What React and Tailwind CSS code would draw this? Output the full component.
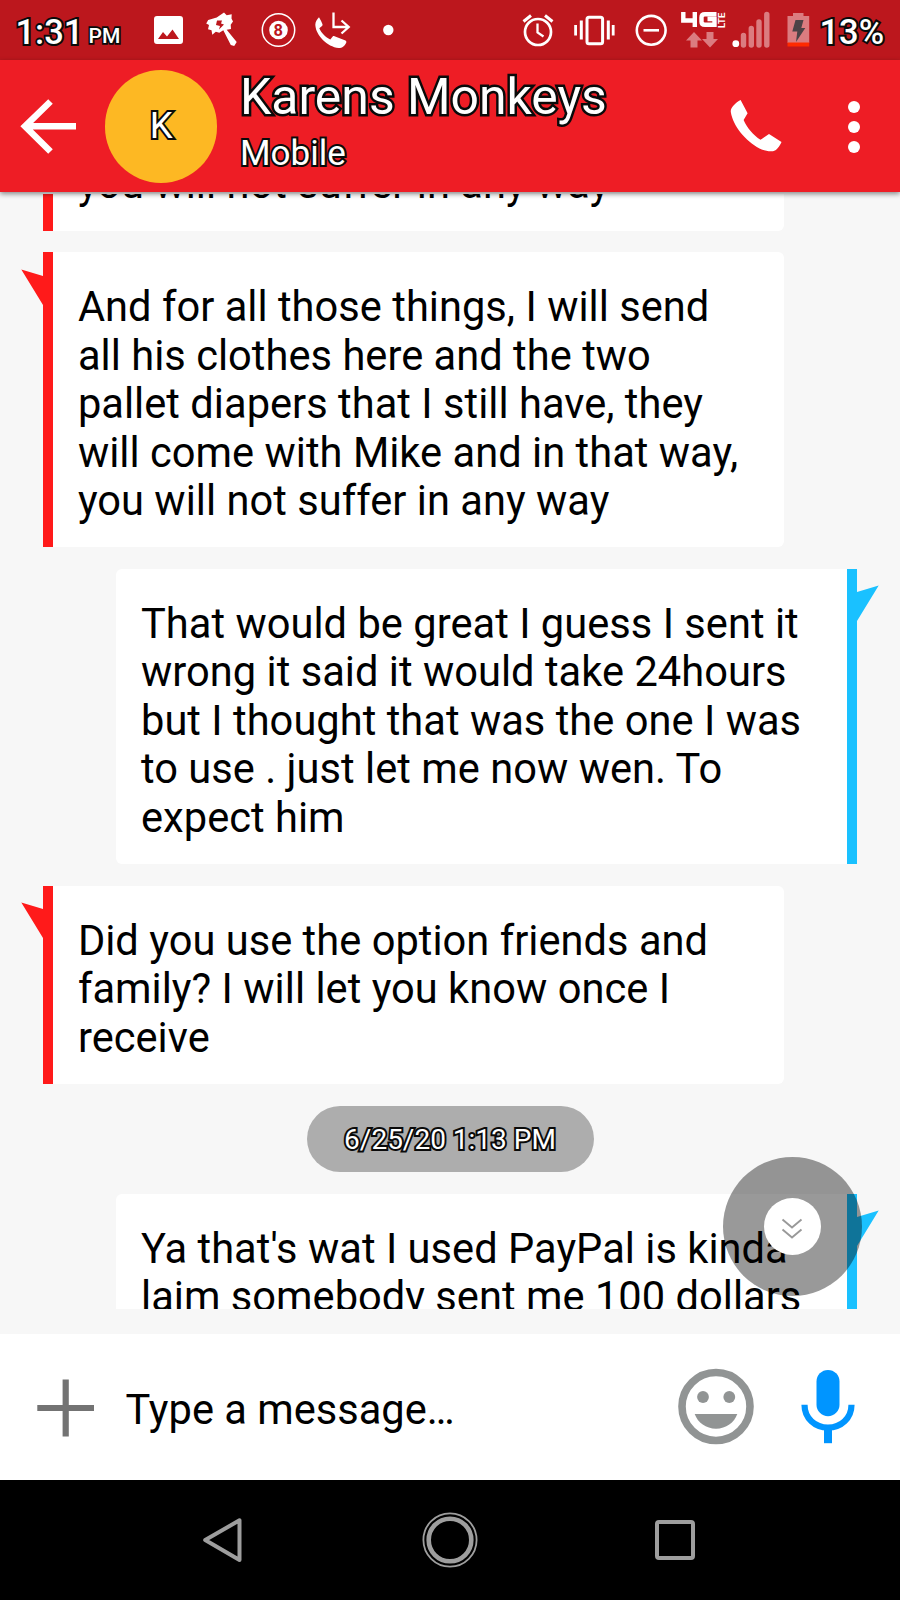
import React from "react";

const outline = "text-white [paint-order:stroke_fill] [-webkit-text-stroke-color:#0a0a0a] whitespace-nowrap";

function StatusBar() {
  return (
    <div className="flex h-[60px] shrink-0 items-start bg-[#bc171d]">
      <div className={`${outline} ml-[15.500px] mt-[12px] w-[61px] text-[34.500px] leading-[40px] font-medium [-webkit-text-stroke-width:4px]`}>1:31</div>
      <div className={`${outline} ml-[12px] mt-[22px] w-[32px] text-[21px] leading-[28px] font-medium [-webkit-text-stroke-width:3.400px]`}>PM</div>
      <svg className="ml-[32.500px] h-[60px] w-[244px]" viewBox="153 0 244 60" fill="#fff">
        <path fillRule="evenodd" d="M157 16h23q3 0 3 3v22q0 3-3 3h-23q-3 0-3-3v-22q0-3 3-3zM158 39h21l-6.5-9.5-5.500 7-4-4.500z" />
        <path fillRule="evenodd" d="M224 12.500l2.700 2.700 5-1-.2 4.300 1.500 3-2.300 3.200.3 4.300-4.300.7 10 12.300-2.500 4-3.400-.9-7.500-14.800-4 2.500-3.500-1-3.500 3-.8-4.500-3.500-1 1-4.300-2.800-1.500 2-3.500 8.500-2.500zM217 20.500l-1 4.500 4 1-1 3.500 5-5-3-1 1-3z" />
        <circle cx="278.500" cy="30" r="16.200" fill="none" stroke="#fff" strokeWidth="1.500" />
        <circle cx="278.500" cy="30" r="9.300" />
        <text x="278.300" y="35.700" textAnchor="middle" fontFamily="Roboto" fontWeight="700" fontSize="16.500" fill="#bc171d">8</text>
        <path d="M319 17.200c1.500 2.500 2.600 4.600 3.500 7 .2.700 0 1.300-.5 1.700l-2.700 2.300c2 4.600 6.300 9 11 11.300l2.400-3c.5-.5 1.200-.6 1.800-.2l11 4.200c.8.500 1.100 1.300.7 2.200-1.200 3-3.800 5.400-7.500 5.400-11.500-1.600-22.800-12.300-23.400-23.400 0-3 2-5.700 3.700-7.500z" />
        <path d="M333.500 12.500v14.500h14M341.500 20.500l7.200 6.500-7.200 6.500" fill="none" stroke="#fff" strokeWidth="2.300" />
        <circle cx="388.300" cy="30" r="5.200" />
      </svg>
      <svg className="ml-[123px] h-[60px] w-[290px]" viewBox="520 0 290 60" fill="none" stroke="#fff">
        <circle cx="538" cy="32" r="13" strokeWidth="2.700" />
        <path d="M537.500 23.500v9l6 4" strokeWidth="2.300" />
        <path d="M523.500 21.500l7.500-6M552.500 21.500l-7.500-6" strokeWidth="3" />
        <rect x="587" y="17.200" width="15.600" height="26.600" rx="2" strokeWidth="3" />
        <path d="M581.300 20.500v19M608.300 20.500v19" strokeWidth="3" />
        <path d="M575.600 25v10.500M613.200 25v10.500" strokeWidth="2.800" />
        <circle cx="651.200" cy="30.300" r="14.400" strokeWidth="2.600" />
        <path d="M643.500 30.300h15.500" strokeWidth="2.600" />
        <path d="M683.300 12v8.500h11M694.800 12v15" strokeWidth="4.400" />
        <path d="M716.500 14.200h-11.500q-3.500 0-3.500 3v4.600q0 3 3.500 3h9.500v-5.800h-7" strokeWidth="4.400" />
        <g transform="translate(725.200 28) rotate(-90)"><text x="0" y="0" fontFamily="Roboto" fontWeight="700" fontSize="9.500" fill="#fff" stroke="none">LTE</text></g>
        <path d="M694 32l8 8.500h-4.500v7h-7v-7h-4.500zM710 47.500l-8-8.500h4.500v-7h7v7h4.500z" fill="#db7c80" stroke="none" />
        <circle cx="735.800" cy="43.700" r="3.400" fill="#fff" stroke="none" />
        <path d="M743.500 35.500v9.500M751.300 28.500v16.500M759 22v23M766.800 14.500v30.500" stroke="#db7c80" strokeWidth="5.400" strokeLinecap="round" />
        <path d="M793 13h10.500v3h5.700v27h-21.700v-27h5.500z" fill="#db7c80" stroke="none" />
        <path d="M787.500 42.500h21.700v4h-21.700z" fill="#ff2a00" stroke="none" />
        <path d="M795.500 20h8l-2.200 8h4l-9.300 14 1.300-10.500h-5z" fill="#4d4246" stroke="none" />
      </svg>
      <div className={`${outline} ml-[9.500px] mt-[12px] text-[34.500px] leading-[40px] font-medium [-webkit-text-stroke-width:4px]`}>13%</div>
    </div>
  );
}

function Header() {
  return (
    <header className="relative z-10 flex h-[132px] shrink-0 items-start bg-[#ee1d25] shadow-[0_2px_5px_rgba(0,0,0,0.45)]">
      <svg className="ml-[19.500px] mt-[36px] h-[60px] w-[57px]" viewBox="20 96 57 60" fill="none" stroke="#fff" strokeWidth="6.500">
        <path d="M50.500 101.500L25 126.300 50.500 151.500M25 126.300h51" />
      </svg>
      <div className="ml-[28.300px] mt-[10px] flex h-[112.600px] w-[112.600px] items-center justify-center rounded-full bg-[#fdb823]">
        <span className={`${outline} text-[36.500px] leading-[40px] [-webkit-text-stroke-width:4px]`}>K</span>
      </div>
      <div className="ml-[22.600px] mt-[8px] w-[480px]">
        <div className={`${outline} text-[49.900px] leading-[58px] [-webkit-text-stroke-width:5px]`}>Karens Monkeys</div>
        <div className={`${outline} mt-[7px] text-[35px] leading-[42px] [-webkit-text-stroke-width:4px]`}>Mobile</div>
      </div>
      <svg className="ml-[9.500px] mt-[36px] h-[60px] w-[54px]" viewBox="729 96 54 60" fill="#fff">
        <path d="M740.600 100l7 13.300-4 6.700c3.500 8 9.500 15 16.900 19.800l8.500-5.800 12.500 8c-2 4.500-5 8.600-8.500 9.200-4 .6-9-.5-13.500-2.800-14-7.500-26.500-22.500-28.700-36.500-.6-4 4.500-9 9.800-11.900z" />
      </svg>
      <div className="ml-[64.500px] mt-[40.500px] flex flex-col gap-[8.200px]">
        <i className="size-[12px] rounded-full bg-white" />
        <i className="size-[12px] rounded-full bg-white" />
        <i className="size-[12px] rounded-full bg-white" />
      </div>
    </header>
  );
}

function Incoming({ lines, tail = true }) {
  return (
    <div className="relative ml-[43.300px] flex w-[741px] shrink-0">
      {tail && (
        <svg className="absolute -left-[22px] top-[16.500px] h-[37px] w-[23px]" viewBox="0 0 23 37" fill="#ff1a1a">
          <path d="M.3.500L22 7h1v30l-1-1z" />
        </svg>
      )}
      <div className="w-[10px] bg-[#ff1a1a]" />
      <Text lines={lines} className="rounded-r-[6px] pl-[24.600px]" />
    </div>
  );
}

function Outgoing({ lines }) {
  return (
    <div className="relative ml-[115.700px] flex w-[741px] shrink-0">
      <Text lines={lines} className="rounded-l-[6px] pl-[25.300px]" />
      <div className="w-[10px] bg-[#1ac1ff]" />
      <svg className="absolute -right-[22px] top-[16px] h-[37px] w-[23px]" viewBox="0 0 23 37" fill="#1ac1ff">
        <path d="M22.700.500L1 7H0v30l1-1z" />
      </svg>
    </div>
  );
}

function Text({ lines, className }) {
  return (
    <div className={`flex-1 bg-white pt-[31px] pb-[22px] text-[41.600px] leading-[48.400px] tracking-[0.035px] whitespace-nowrap text-black ${className}`}>
      {lines.map((line) => (
        <p key={line}>{line}</p>
      ))}
    </div>
  );
}

function Conversation() {
  return (
    <main className="relative h-[1141.500px] shrink-0 bg-[#f7f7f7] pt-[2px]">
      <div className="flex h-[1115px] flex-col gap-[21.700px] overflow-hidden">
        <div className="-mt-[64.800px] shrink-0">
          <Incoming tail={false} lines={["you will not suffer in any way"]} />
        </div>
        <Incoming
          lines={[
            "And for all those things, I will send",
            "all his clothes here and the two",
            "pallet diapers that I still have, they",
            "will come with Mike and in that way,",
            "you will not suffer in any way",
          ]}
        />
        <Outgoing
          lines={[
            "That would be great I guess I sent it",
            "wrong it said it would take 24hours",
            "but I thought that was the one I was",
            "to use . just let me now wen. To",
            "expect him",
          ]}
        />
        <Incoming lines={["Did you use the option friends and", "family? I will let you know once I", "receive"]} />
        <div className="flex h-[66.600px] w-[287px] shrink-0 items-center justify-center self-center rounded-full bg-[#adadad]">
          <span className={`${outline} pt-[3px] text-[28px] leading-[34px] [-webkit-text-stroke-width:4px]`}>6/25/20 1:13 PM</span>
        </div>
        <Outgoing lines={["Ya that's wat I used PayPal is kinda", "laim somebody sent me 100 dollars"]} />
      </div>
      <button className="absolute left-[722.700px] top-[964.700px] flex size-[139.400px] items-center justify-center rounded-full bg-black/40">
        <span className="flex size-[57.600px] items-center justify-center rounded-full bg-white">
          <svg className="mt-[3px] size-[24px]" viewBox="0 0 24 24" fill="none" stroke="#999" strokeWidth="1.900">
            <path d="M2.500 3.500l9.500 8 9.500-8M2.500 13.500l9.500 8 9.500-8" />
          </svg>
        </span>
      </button>
    </main>
  );
}

function Composer() {
  return (
    <div className="flex flex-1 items-start bg-white">
      <svg className="ml-[37px] mt-[45.500px] h-[58px] w-[57.500px]" viewBox="37 1379 57.500 58" fill="none" stroke="#737373" strokeWidth="6.200">
        <path d="M37.300 1408h56.700M65.700 1379.500v57" />
      </svg>
      <span className="ml-[31px] mt-[52px] w-[500px] text-[41.600px] leading-[48px] whitespace-nowrap text-black">Type a message…</span>
      <svg className="ml-[52px] mt-[34.500px] h-[77px] w-[77px]" viewBox="678 1368.500 77 77" fill="#919494">
        <circle cx="716" cy="1407" r="34" fill="none" stroke="#919494" strokeWidth="7.600" />
        <circle cx="703" cy="1397.500" r="5.900" />
        <circle cx="729.300" cy="1397.500" r="5.900" />
        <path d="M694.700 1414.500h42.600c-3 8.500-11.300 14.700-21.300 14.700s-18.300-6.200-21.300-14.700z" />
      </svg>
      <svg className="ml-[45.300px] mt-[35.500px] h-[75px] w-[56px]" viewBox="800 1369.500 56 75" fill="#0095ff">
        <rect x="816.500" y="1370.500" width="23" height="46.200" rx="11.500" />
        <path d="M804.500 1405.200c0 13.500 10.500 22.800 23.500 22.800s23.500-9.300 23.500-22.800" fill="none" stroke="#0095ff" strokeWidth="6.200" />
        <path d="M824 1428h8v15.700h-8z" />
      </svg>
    </div>
  );
}

function NavBar() {
  return (
    <nav className="flex h-[120px] shrink-0 items-center bg-black">
      <svg className="ml-[202px] h-[46px] w-[40px]" viewBox="202 1517 40 46" fill="none" stroke="#9e9e9e" strokeWidth="4" strokeLinejoin="round">
        <path d="M205.200 1540L239.500 1520.300v39.800z" />
      </svg>
      <svg className="ml-[180px] size-[56px]" viewBox="0 0 56 56" fill="none" stroke="#9e9e9e">
        <circle cx="28" cy="28" r="26.600" strokeWidth="1.800" />
        <circle cx="28" cy="28" r="21.300" strokeWidth="4.600" />
      </svg>
      <div className="ml-[177px] size-[40px] rounded-[4px] border-[4px] border-[#9e9e9e]" />
    </nav>
  );
}

export default function App() {
  return (
    <div className="flex h-[1600px] w-[900px] flex-col overflow-hidden bg-white font-[Roboto,sans-serif]">
      <StatusBar />
      <Header />
      <Conversation />
      <Composer />
      <NavBar />
    </div>
  );
}
